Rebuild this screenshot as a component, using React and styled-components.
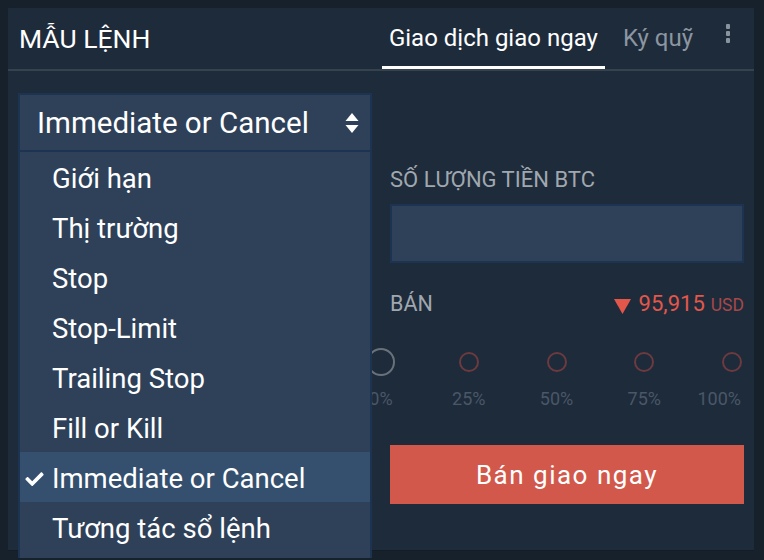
import React from "react";
import styled, { createGlobalStyle } from "styled-components";

const Global = createGlobalStyle`
  html, body { margin: 0; padding: 0; background: #17212c; overflow: hidden; }
  body { padding: 8px; font-family: Roboto, "Noto Sans", sans-serif; color: #fff; }
  * { box-sizing: border-box; }
`;

const Panel = styled.div`
  width: 746px;
  height: 542px;
  background: #1e2b3b;
  box-shadow: 0 1px 0 #141d27;
  display: flex;
  flex-direction: column;
`;

const Header = styled.div`
  height: 63px;
  flex: none;
  border-bottom: 2px solid #37424f;
  display: flex;
  align-items: stretch;
  padding: 0 10px 0 11px;
`;

const Title = styled.div`
  font-size: 26.5px;
  line-height: 30px;
  align-self: center;
  margin-top: 1px;
  color: #fff;
  flex: 1;
`;

const Tabs = styled.div`
  display: flex;
  align-items: stretch;
  gap: 11px;
`;

const Tab = styled.div`
  padding: 0 7px;
  font-size: 24px;
  line-height: 28px;
  display: flex;
  align-items: center;
  padding-top: 1px;
  border-bottom: 3px solid ${(p) => (p.$active ? "#ffffff" : "transparent")};
  color: ${(p) => (p.$active ? "#ffffff" : "#8c96a0")};
`;

const Kebab = styled.div`
  width: 30px;
  margin-left: 14px;
  display: flex;
  flex-direction: column;
  align-items: center;
  gap: 2.5px;
  padding-top: 16px;
  padding-right: 2px;
`;

const Dot = styled.span`
  width: 4.5px;
  height: 4.5px;
  border-radius: 1px;
  background: #8a949e;
`;

const Body = styled.div`
  display: grid;
  grid-template-columns: 354px 354px;
  align-items: start;
  gap: 18px;
  padding: 22px 10px 0;
`;

const SelectWrap = styled.div`
  position: relative;
`;

const SelectBox = styled.div`
  height: 59px;
  background: #2e4159;
  border: 2px solid #1c3452;
  display: flex;
  align-items: center;
  justify-content: space-between;
  padding: 0 11px 0 17px;
  font-size: 29.5px;
  line-height: 34px;
  color: #fff;
`;

const Dropdown = styled.ul`
  position: absolute;
  top: 100%;
  left: 0;
  right: 0;
  margin: 0;
  padding: 0 0 20px;
  list-style: none;
  background: #2e4159;
  border: 2px solid #1c3452;
  border-top: 0;
  z-index: 5;
`;

const Item = styled.li`
  position: relative;
  height: 50px;
  display: flex;
  align-items: center;
  padding: 4px 0 0 32px;
  font-size: 27.5px;
  line-height: 32px;
  color: #fff;
  background: ${(p) => (p.$selected ? "#34506e" : "transparent")};
`;

const Check = styled.svg`
  position: absolute;
  left: 5px;
  top: 19px;
  width: 19px;
  height: 15px;
`;

const Form = styled.div`
  padding-top: 75px;
  display: flex;
  flex-direction: column;
`;

const Label = styled.div`
  font-size: 22px;
  line-height: 24px;
  color: #a0a7ae;
  text-transform: uppercase;
`;

const Input = styled.div`
  margin-top: 12px;
  height: 59px;
  background: #2e4159;
  border: 2px solid #1c3452;
`;

const PriceRow = styled.div`
  margin-top: 26px;
  height: 30px;
  display: flex;
  justify-content: space-between;
  align-items: baseline;
`;

const Side = styled.span`
  font-size: 21.5px;
  line-height: 30px;
  color: #a0a7ae;
`;

const Price = styled.span`
  display: flex;
  align-items: baseline;
  color: #e2574a;
  font-size: 22px;
  line-height: 30px;
`;

const Arrow = styled.svg`
  width: 17px;
  height: 15px;
  margin-right: 8px;
  align-self: center;
  margin-top: 3px;
`;

const Unit = styled.span`
  font-size: 17.5px;
  color: #a5484a;
  margin-left: 6px;
`;

const Slider = styled.div`
  margin: 29px 12px 0 -9px;
  position: relative;
  height: 61px;
`;

const Mark = styled.span`
  position: absolute;
  top: ${(p) => (p.$active ? 0 : 4)}px;
  width: ${(p) => (p.$active ? 28 : 20)}px;
  height: ${(p) => (p.$active ? 28 : 20)}px;
  transform: translateX(-50%);
  border-radius: 50%;
  border: 2px solid ${(p) => (p.$active ? "#69727b" : "#6c3a3f")};
`;

const MarkLabel = styled.span`
  position: absolute;
  top: 41px;
  font-size: 18px;
  line-height: 20px;
  color: #4a5767;
  transform: ${(p) => (p.$last ? "translateX(calc(-100% + 9px))" : "translateX(-50%)")};
`;

const Button = styled.button`
  margin-top: 36px;
  height: 59px;
  border: 0;
  background: #d2584b;
  color: #fff;
  font-family: Roboto, sans-serif;
  font-size: 26px;
  letter-spacing: 1.5px;
`;

const items = [
  "Giới hạn",
  "Thị trường",
  "Stop",
  "Stop-Limit",
  "Trailing Stop",
  "Fill or Kill",
  "Immediate or Cancel",
  "Tương tác sổ lệnh",
];

const marks = [0, 25, 50, 75, 100];

export default function App() {
  return (
    <>
      <Global />
      <Panel>
        <Header>
          <Title>MẪU LỆNH</Title>
          <Tabs>
            <Tab $active>Giao dịch giao ngay</Tab>
            <Tab>Ký quỹ</Tab>
          </Tabs>
          <Kebab>
            <Dot />
            <Dot />
            <Dot />
          </Kebab>
        </Header>
        <Body>
          <SelectWrap>
            <SelectBox>
              <span>Immediate or Cancel</span>
              <svg width="14" height="20" viewBox="0 0 14 20">
                <path d="M7 0 L13.5 8 H0.5 Z" fill="#fff" />
                <path d="M7 20 L13.5 12 H0.5 Z" fill="#fff" />
              </svg>
            </SelectBox>
            <Dropdown>
              {items.map((t) => (
                <Item key={t} $selected={t === "Immediate or Cancel"}>
                  {t === "Immediate or Cancel" && (
                    <Check viewBox="0 0 512 420">
                      <path
                        fill="#fff"
                        d="M173.9 411.4l-166.4-166.4c-10-10-10-26.2 0-36.2l36.2-36.2c10-10 26.2-10 36.2 0L192 284.7 432.1 44.6c10-10 26.2-10 36.2 0l36.2 36.2c10 10 10 26.2 0 36.2l-294.4 294.4c-10 10-26.2 10-36.2 0z"
                      />
                    </Check>
                  )}
                  {t}
                </Item>
              ))}
            </Dropdown>
          </SelectWrap>
          <Form>
            <Label>Số lượng tiền BTC</Label>
            <Input />
            <PriceRow>
              <Side>BÁN</Side>
              <Price>
                <Arrow viewBox="0 0 17 15">
                  <path d="M0 0 H17 L8.5 15 Z" fill="#e2574a" />
                </Arrow>
                95,915
                <Unit>USD</Unit>
              </Price>
            </PriceRow>
            <Slider>
              {marks.map((m, i) => (
                <React.Fragment key={m}>
                  <Mark $active={i === 0} style={{ left: `${m}%` }} />
                  <MarkLabel $last={i === marks.length - 1} style={{ left: `${m}%` }}>
                    {m}%
                  </MarkLabel>
                </React.Fragment>
              ))}
            </Slider>
            <Button>Bán giao ngay</Button>
          </Form>
        </Body>
      </Panel>
    </>
  );
}
